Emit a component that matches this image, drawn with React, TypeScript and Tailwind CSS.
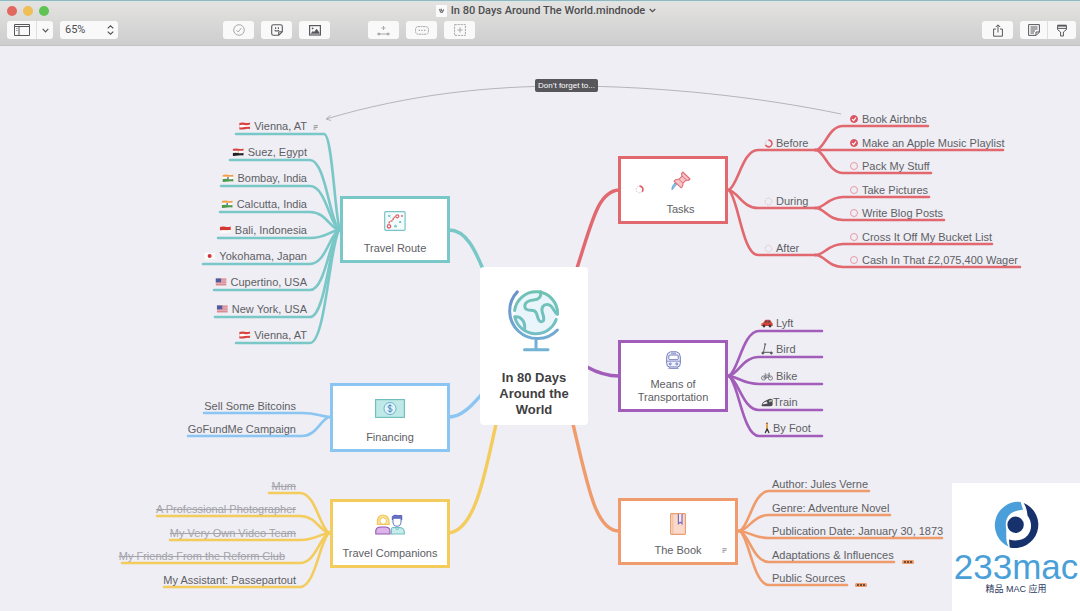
import React, { useState } from "react";

const TOOLBAR = 46;

const TEAL = "#7ac7c8";
const BLUE = "#8ac6f1";
const YELLOW = "#f4cc5c";
const RED = "#e2686f";
const PURPLE = "#a25dba";
const ORANGE = "#f09b6b";

type Topic = {
  text: string;
  from: number;
  to: number;
  y: number;
  textX: number;
  icon?: React.ReactNode;
  struck?: boolean;
  checked?: boolean;
  note?: boolean;
};

type Branch = {
  color: string;
  side: "left" | "right";
  hub: [number, number];
  rise: number;
  topics: Topic[];
};

/* ---------- small pictograms ---------- */

function Flag({ kind }: { kind: "at" | "eg" | "in" | "id" | "jp" | "us" }) {
  return (
    <svg width="11" height="8" viewBox="0 0 11 8" className="shrink-0" aria-hidden="true">
      {kind === "at" && (
        <>
          <path d="M0 1 Q3 0 5.5 .8 T11 .4 V7 Q8 6.6 5.5 7.2 T0 7.4Z" fill="#d9433f" />
          <path d="M0 3.2 Q3 2.4 5.5 3 T11 2.6 V4.8 Q8 4.5 5.5 5.1 T0 5.3Z" fill="#fff" />
        </>
      )}
      {kind === "eg" && (
        <>
          <path d="M0 1 Q3 0 5.5 .8 T11 .4 V3 H0Z" fill="#d8403f" />
          <path d="M0 2.8 H11 V5.2 H0Z" fill="#fff" />
          <path d="M0 5 Q3 4.4 5.5 5 T11 4.7 V7.4 Q8 7 5.5 7.5 T0 7.9Z" fill="#222" />
          <circle cx="5.5" cy="4" r=".7" fill="#c79a3a" />
        </>
      )}
      {kind === "in" && (
        <>
          <path d="M0 1 Q3 0 5.5 .8 T11 .4 V3 H0Z" fill="#f0a04a" />
          <path d="M0 2.8 H11 V5.2 H0Z" fill="#fff" />
          <path d="M0 5 Q3 4.4 5.5 5 T11 4.7 V7.4 Q8 7 5.5 7.5 T0 7.9Z" fill="#4d9a4c" />
          <circle cx="5.5" cy="4" r=".9" fill="#4b5fa8" />
        </>
      )}
      {kind === "id" && (
        <>
          <path d="M0 1 Q3 0 5.5 .8 T11 .4 V4 Q8 3.7 5.5 4.3 T0 4.6Z" fill="#d7352f" />
          <path d="M0 4.6 Q3 3.8 5.5 4.3 T11 4 V7 Q8 6.6 5.5 7.2 T0 7.4Z" fill="#fafafa" />
        </>
      )}
      {kind === "jp" && (
        <>
          <path d="M0 1 Q3 0 5.5 .8 T11 .4 V7 Q8 6.6 5.5 7.2 T0 7.4Z" fill="#fbfbfb" />
          <circle cx="5.3" cy="4" r="2" fill="#d3343a" />
        </>
      )}
      {kind === "us" && (
        <>
          <path d="M0 .6 H11 V7.4 H0Z" fill="#efd9dc" />
          <path d="M0 1.1H11M0 3H11M0 4.9H11M0 6.8H11" stroke="#cf6a74" strokeWidth="1" />
          <path d="M0 .6 H5.5 V4.3 H0Z" fill="#4d5c9d" />
        </>
      )}
    </svg>
  );
}

function Car() {
  return (
    <svg width="12" height="10" viewBox="0 0 12 10" aria-hidden="true">
      <path d="M.3 8V5.4L2.4 4.6 4 2.2Q4.3 1.7 5 1.7H8.4Q9 1.7 9.4 2.2L10.8 4.5 11.7 5.4V8Z" fill="#d8443c" />
      <path d="M3.6 4.5 4.7 2.7H6V4.5ZM6.7 4.5V2.7H8.4L9.5 4.5Z" fill="#47505c" />
      <circle cx="3" cy="8" r="1.4" fill="#3b3b3f" />
      <circle cx="9" cy="8" r="1.4" fill="#3b3b3f" />
      <path d="M.3 6H1.5" stroke="#f4d36a" />
    </svg>
  );
}
function Scooter() {
  return (
    <svg width="12" height="12" viewBox="0 0 12 12" fill="none" stroke="#54545a" aria-hidden="true">
      <path d="M3 1H5.2M4.3 1 2.6 8.8M2.6 9.3H9.6" />
      <circle cx="1.9" cy="10" r="1" fill="#54545a" />
      <circle cx="10.3" cy="10" r="1" fill="#54545a" />
    </svg>
  );
}
function Bike() {
  return (
    <svg width="12" height="9" viewBox="0 0 12 9" fill="none" stroke="#6b6b72" strokeWidth=".8" aria-hidden="true">
      <circle cx="2.6" cy="6" r="2.1" />
      <circle cx="9.4" cy="6" r="2.1" />
      <path d="M2.6 6 4.3 3H8L6 6H2.6M4.3 3 6 6M8 3 9.4 6M7.4 1.2H8.6L8 3M3.5 1.9H5.1" />
    </svg>
  );
}
function Train() {
  return (
    <svg width="12" height="9" viewBox="0 0 12 9" aria-hidden="true">
      <path d="M.5 7.4Q.8 4.6 4 3L8 .9Q11 .3 11.6 1.4V7Q11 8.2 9 8.2H2Q.5 8.2.5 7.4Z" fill="#4a4a4f" />
      <path d="M2 5.3Q4 3.8 6 3.6L6.5 5.4Q4 6.4 1.4 6.2Z" fill="#e8e8ec" />
      <path d="M8 2.5 11 1.6V3.4L8 4.2Z" fill="#a9bdb0" />
    </svg>
  );
}
function Walker() {
  return (
    <svg width="6" height="12" viewBox="0 0 6 12" fill="none" strokeLinecap="round" aria-hidden="true">
      <circle cx="3" cy="1.5" r="1.1" fill="#9a6b46" />
      <path d="M3 3V6.5" stroke="#e6a04b" strokeWidth="2" />
      <path d="M3 7 1.4 10.6M3.2 7 4.8 10.6" stroke="#37373c" strokeWidth="1.3" />
    </svg>
  );
}

function Progress({ share }: { share: number }) {
  const r = 3.4;
  const c = 2 * Math.PI * r;
  return (
    <svg width="9" height="9" viewBox="0 0 9 9" fill="none" className="shrink-0" aria-hidden="true">
      <circle cx="4.5" cy="4.5" r={r} stroke="#dcaab4" strokeWidth=".8" strokeDasharray="1.4 1.2" />
      {share > 0 && (
        <circle
          cx="4.5"
          cy="4.5"
          r={r}
          stroke="#df5c68"
          strokeWidth="1.6"
          strokeDasharray={`${c * share} ${c}`}
          transform="rotate(-90 4.5 4.5)"
        />
      )}
    </svg>
  );
}

function NoteMark() {
  return (
    <svg width="5" height="5" viewBox="0 0 5 5" stroke="#8b8b92" strokeWidth=".9" aria-hidden="true">
      <path d="M.4.7H4.8M.4 2.4H4.4M.2 4.1H2.6" />
    </svg>
  );
}

/* ---------- main-topic drawings ---------- */

function Globe() {
  return (
    <svg width="54" height="64" viewBox="0 0 54 64" fill="none" strokeWidth="3" strokeLinecap="round" aria-hidden="true">
      <defs>
        <linearGradient id="stand" x1="0" y1="0" x2="0" y2="64" gradientUnits="userSpaceOnUse">
          <stop offset="0" stopColor="#6a8fce" />
          <stop offset="1" stopColor="#74b4d4" />
        </linearGradient>
        <linearGradient id="sphere" x1="0" y1="0" x2="0" y2="46" gradientUnits="userSpaceOnUse">
          <stop offset="0" stopColor="#6fc3b2" />
          <stop offset="1" stopColor="#74bfc6" />
        </linearGradient>
      </defs>
      <circle cx="29" cy="23.5" r="21" fill="#e9f5fa" />
      <path d="M10.3 2.9A27.6 27.6 0 1 0 50.4 41" stroke="url(#stand)" />
      <path d="M29 51.5V60.5M17.5 60.8H41" stroke="url(#stand)" />
      <g stroke="url(#sphere)">
        <path d="M7.6 21.5A21.6 21.6 0 0 1 50.6 25" />
        <path d="M49.2 30.5A21.6 21.6 0 0 1 7.8 28" />
        <path d="M33.5 2.6C34.6 8 31.5 10.7 26.5 11C21.5 11.3 17.6 13.5 17.8 17.5C18 22.2 23.5 20.8 27 21.8C31.2 23 29.7 31.6 33.5 32.6C38.6 33.6 36.5 27 35.3 23.2C34 18.5 36.2 15.4 40.5 15.6C46 15.8 46 22.4 50.4 25.2" />
        <path d="M8 27.8C13.6 27.4 18.6 31.8 17.6 40.5" />
      </g>
    </svg>
  );
}
function RouteMap() {
  return (
    <svg width="22" height="20" viewBox="0 0 22 20" fill="none" aria-hidden="true">
      <rect x=".7" y=".7" width="20.4" height="18.6" rx="1" fill="#f4fbfb" stroke="#79c3c6" strokeWidth="1.2" />
      <path d="M5 12.5C5 9.8 7.5 10.5 8.5 9.5S9 6 11.3 6" stroke="#e0606a" strokeWidth="1.4" strokeDasharray="2.2 .6" />
      <circle cx="13.3" cy="5.3" r="1.5" stroke="#e0606a" strokeWidth="1.2" />
      <circle cx="5" cy="15.3" r="1.7" stroke="#e0606a" strokeWidth="1.3" />
      <circle cx="18" cy="5" r=".9" fill="#e0606a" />
      <path d="M4 4.2 6.5 6.2M6.5 3.8 4.4 6M10.3 15.8 11.5 13.8 12.7 15.8ZM15.3 10 17 12M17 10 15.3 12" stroke="#6cbfc0" />
    </svg>
  );
}
function Banknote() {
  return (
    <svg width="30" height="19" viewBox="0 0 30 19" fill="none" aria-hidden="true">
      <rect x=".6" y=".6" width="28.8" height="17.8" fill="#bfe9e6" stroke="#6cbcbc" strokeWidth="1.1" />
      <circle cx="15" cy="9.5" r="6" fill="#e6f5f9" stroke="#6aaed4" />
      <path d="M17.1 7.5Q16.6 6.4 15 6.4 13 6.4 13 7.9 13 9.2 15 9.5 17.2 9.8 17.2 11.1 17.2 12.6 15 12.6 13.2 12.6 12.8 11.3M15 5.2V13.8" stroke="#4b8ec4" />
    </svg>
  );
}
function Couple() {
  return (
    <svg width="30" height="21" viewBox="0 0 30 21" fill="none" aria-hidden="true">
      <path d="M2.4 10.5Q1.6 1 8 1T14.2 10.5Z" fill="#fae39c" stroke="#efc455" strokeWidth="1.2" />
      <circle cx="8.2" cy="7" r="3.3" fill="#fff" stroke="#efc455" />
      <path d="M.8 20V16.5Q1.3 13 6 13H10Q14.5 13 15 16.5V20Z" fill="#dcb4ea" stroke="#9256b2" strokeWidth="1.1" />
      <path d="M16.4 20V16.5Q15.8 14 18 13.5H25Q29 14 29.3 17.5V20Z" fill="#c5ecea" stroke="#70bfc1" strokeWidth="1.1" />
      <path d="M18 5.5V8.5Q18.6 12.2 22 12.2T26 8.5V5.5" fill="#fff" stroke="#7281cb" strokeWidth="1.1" />
      <path d="M17.3 6V2.5Q20 .3 22.5 1.5H26.8V6L25 4.3H19Z" fill="#6872c7" stroke="#4d55b0" strokeWidth=".8" />
      <path d="M20 13.5 22.3 16 24.5 13.5" stroke="#70bfc1" />
    </svg>
  );
}
function Pin() {
  return (
    <svg width="20" height="20" viewBox="0 0 20 20" fill="none" strokeLinejoin="round" aria-hidden="true">
      <path d="M5.8 13.2 1 18.8 1.2 16 3.8 12Z" fill="#8bc4e8" stroke="#68a9d6" />
      <path d="M11.8 1 19 8 17.3 9.5 15.4 8.9 12 12.2Q12.3 15 10.3 16.8L2.9 10.2Q4.5 8 8 8.3L11 5 10.4 2.6Z" fill="#f7c3c6" stroke="#dd6f78" strokeWidth="1.1" />
      <path d="M11 5 15.4 8.9M8 8.3 12 12.2" stroke="#dd6f78" />
    </svg>
  );
}
function Metro() {
  return (
    <svg width="15" height="19" viewBox="0 0 15 19" fill="none" stroke="#6f79bd" aria-hidden="true">
      <path d="M4.500 .8H10.500Q14.300 1.600 14.300 6V12.500Q14.300 16 11.300 16H3.700Q.7 16 .7 12.500V6Q.7 1.600 4.500 .8Z" fill="#eff1fb" />
      <rect x="2.8" y="4" width="9.400" height="4.700" rx="1" fill="#fff" />
      <path d="M5 2.300H10M.8 10.200H14.200M3.600 16 2.600 18M11.400 16 12.400 18M3.400 17.500H11.600" strokeWidth=".8" />
      <circle cx="4.200" cy="12.900" r="1" />
      <circle cx="10.800" cy="12.900" r="1" />
    </svg>
  );
}
function Book() {
  return (
    <svg width="16" height="22" viewBox="0 0 16 22" fill="none" aria-hidden="true">
      <rect x=".6" y=".6" width="14.8" height="20.8" rx=".8" fill="#fad9cb" stroke="#e79c72" strokeWidth="1.1" />
      <path d="M2.8 1V21" stroke="#efb190" strokeWidth=".8" />
      <path d="M8.4 1V10.8L10.2 9.2 12 10.8V1" fill="#fbe9e4" stroke="#6d63c0" strokeWidth="1.1" />
    </svg>
  );
}

/* ---------- document ---------- */

const branches: Branch[] = [
  {
    color: TEAL,
    side: "left",
    hub: [341, 230],
    rise: 15,
    topics: [
      { text: "Vienna, AT", from: 236, to: 324, y: 134, textX: 307, icon: <Flag kind="at" />, note: true },
      { text: "Suez, Egypt", from: 230, to: 310, y: 160, textX: 307, icon: <Flag kind="eg" /> },
      { text: "Bombay, India", from: 221, to: 310, y: 186, textX: 307, icon: <Flag kind="in" /> },
      { text: "Calcutta, India", from: 220, to: 310, y: 212, textX: 307, icon: <Flag kind="in" /> },
      { text: "Bali, Indonesia", from: 218, to: 310, y: 238, textX: 307, icon: <Flag kind="id" /> },
      { text: "Yokohama, Japan", from: 203, to: 310, y: 264, textX: 307, icon: <Flag kind="jp" /> },
      { text: "Cupertino, USA", from: 214, to: 310, y: 290, textX: 307, icon: <Flag kind="us" /> },
      { text: "New York, USA", from: 215, to: 310, y: 317, textX: 307, icon: <Flag kind="us" /> },
      { text: "Vienna, AT", from: 236, to: 310, y: 343, textX: 307, icon: <Flag kind="at" /> },
    ],
  },
  {
    color: BLUE,
    side: "left",
    hub: [331, 417],
    rise: 14,
    topics: [
      { text: "Sell Some Bitcoins", from: 204, to: 302, y: 413, textX: 296 },
      { text: "GoFundMe Campaign", from: 188, to: 302, y: 436, textX: 296 },
    ],
  },
  {
    color: YELLOW,
    side: "left",
    hub: [331, 533],
    rise: 14,
    topics: [
      { text: "Mum", from: 269, to: 300, y: 493, textX: 296, struck: true },
      { text: "A Professional Photographer", from: 157, to: 300, y: 516, textX: 296, struck: true },
      { text: "My Very Own Video Team", from: 170, to: 300, y: 540, textX: 296, struck: true },
      { text: "My Friends From the Reform Club", from: 122, to: 300, y: 563, textX: 285, struck: true },
      { text: "My Assistant: Passepartout", from: 164, to: 300, y: 587, textX: 296 },
    ],
  },
  {
    color: RED,
    side: "right",
    hub: [727, 190],
    rise: 14,
    topics: [
      { text: "Before", from: 758, to: 816, y: 150, textX: 764, icon: <Progress share={0.66} /> },
      { text: "During", from: 758, to: 816, y: 208, textX: 764, icon: <Progress share={0} /> },
      { text: "After", from: 758, to: 816, y: 255, textX: 764, icon: <Progress share={0} /> },
    ],
  },
  {
    color: RED,
    side: "right",
    hub: [815, 150],
    rise: 14,
    topics: [
      { text: "Book Airbnbs", from: 843, to: 928, y: 126, textX: 850, checked: true },
      { text: "Make an Apple Music Playlist", from: 843, to: 1003, y: 150, textX: 850, checked: true },
      { text: "Pack My Stuff", from: 843, to: 931, y: 173, textX: 850, checked: false },
    ],
  },
  {
    color: RED,
    side: "right",
    hub: [815, 208],
    rise: 14,
    topics: [
      { text: "Take Pictures", from: 843, to: 929, y: 197, textX: 850, checked: false },
      { text: "Write Blog Posts", from: 843, to: 944, y: 220, textX: 850, checked: false },
    ],
  },
  {
    color: RED,
    side: "right",
    hub: [815, 255],
    rise: 14,
    topics: [
      { text: "Cross It Off My Bucket List", from: 843, to: 992, y: 244, textX: 850, checked: false },
      { text: "Cash In That £2,075,400 Wager", from: 843, to: 1020, y: 267, textX: 850, checked: false },
    ],
  },
  {
    color: PURPLE,
    side: "right",
    hub: [727, 376],
    rise: 15,
    topics: [
      { text: "Lyft", from: 759, to: 822, y: 331, textX: 761, icon: <Car /> },
      { text: "Bird", from: 759, to: 822, y: 357, textX: 761, icon: <Scooter /> },
      { text: "Bike", from: 759, to: 822, y: 384, textX: 761, icon: <Bike /> },
      { text: "Train", from: 759, to: 822, y: 410, textX: 761, icon: <Train /> },
      { text: "By Foot", from: 759, to: 822, y: 436, textX: 764, icon: <Walker /> },
    ],
  },
  {
    color: ORANGE,
    side: "right",
    hub: [738, 531],
    rise: 14,
    topics: [
      { text: "Author: Jules Verne", from: 769, to: 869, y: 491, textX: 772 },
      { text: "Genre: Adventure Novel", from: 769, to: 890, y: 515, textX: 772 },
      { text: "Publication Date: January 30, 1873", from: 769, to: 942, y: 538, textX: 772 },
      { text: "Adaptations & Influences", from: 769, to: 894, y: 562, textX: 772 },
      { text: "Public Sources", from: 769, to: 847, y: 585, textX: 772 },
    ],
  },
];

const trunks: [string, string][] = [
  [TEAL, "M449 230C466 230 475 250 483 269"],
  [BLUE, "M449 417C462 417 472 405 482 394"],
  [YELLOW, "M449 533C474 530 484 480 496 424"],
  [RED, "M619 190C598 191 592 222 577 268"],
  [PURPLE, "M619 376C606 376 596 372 587 367"],
  [ORANGE, "M619 531C596 531 588 488 573 424"],
];

const folded: [number, number][] = [
  [902, 560],
  [855, 583],
];

function topicPath(branch: Branch, t: Topic) {
  const [hx, hy] = branch.hub;
  const near = branch.side === "left" ? t.to : t.from;
  const far = branch.side === "left" ? t.from : t.to;
  const run = near - hx;
  const start = hx + run * 0.06;
  return `M${hx} ${hy}H${start}C${hx + run * 0.36} ${hy + (t.y - hy) * 0.12} ${near - run * 0.5} ${t.y} ${near} ${t.y}H${far}`;
}

function CheckTopic({ topic }: { topic: Topic }) {
  const [done, setDone] = useState(!!topic.checked);
  return (
    <label className="flex items-center gap-1">
      <span className="relative flex">
        <input
          type="checkbox"
          checked={done}
          onChange={() => setDone(!done)}
          className="size-2 appearance-none rounded-full border border-[#e79aa4] checked:border-[#dd5563] checked:bg-[#dd5563]"
        />
        {done && (
          <svg viewBox="0 0 8 8" fill="none" stroke="#fff" strokeWidth="1.1" className="pointer-events-none absolute inset-0 size-2" aria-hidden="true">
            <path d="M2 4.2 3.5 5.6 6 2.6" />
          </svg>
        )}
      </span>
      {topic.text}
    </label>
  );
}

function TopicLabel({ topic, side, rise }: { topic: Topic; side: "left" | "right"; rise: number }) {
  const look = topic.struck ? "text-[#a4a4aa] line-through" : "text-[#5e5e64]";
  const anchor = side === "left" ? "-translate-x-full" : "";
  const tight = topic.text === "Train";
  const gap = tight ? "gap-0" : side === "right" && topic.icon ? "gap-[3px]" : "gap-1";
  return (
    <li
      className={`absolute flex h-[14px] items-center whitespace-nowrap text-[11px] leading-[14px] ${gap} ${look} ${anchor}`}
      style={{ left: topic.textX, top: topic.y - rise - TOOLBAR }}
    >
      {topic.checked !== undefined ? (
        <CheckTopic topic={topic} />
      ) : (
        <>
          {topic.icon}
          {topic.text}
        </>
      )}
      {topic.note && (
        <span className="absolute top-[6px] left-full ml-[6px]">
          <NoteMark />
        </span>
      )}
    </li>
  );
}

type BoxProps = {
  x: number;
  y: number;
  className: string;
  icon: React.ReactNode;
  children: React.ReactNode;
};

function Box({ x, y, className, icon, children }: BoxProps) {
  return (
    <section
      className={`absolute flex flex-col items-center justify-between border-3 bg-white pb-[5px] text-center text-[11px] leading-[13px] text-[#5e5e64] ${className}`}
      style={{ left: x, top: y - TOOLBAR }}
    >
      {icon}
      <h2>{children}</h2>
    </section>
  );
}

function ToolButton({ label, children, dim }: { label: string; children: React.ReactNode; dim?: boolean }) {
  return (
    <button
      type="button"
      aria-label={label}
      className={`flex h-[18px] w-[31px] items-center justify-center rounded-[3px] bg-[#f9f9fa] ${dim ? "text-[#a9a9ac]" : "text-[#58585c]"}`}
    >
      {children}
    </button>
  );
}

function Header() {
  return (
    <header className="flex h-[46px] shrink-0 flex-col border-t border-b border-t-[#94b9bd] border-b-[#c3c3c6] bg-linear-to-b from-[#e4e3e1] to-[#cdcdce] shadow-[inset_0_1px_0_#d5e6ea]">
      <div className="grid h-[19px] grid-cols-[1fr_auto_1fr] items-center">
        <div className="flex gap-[6px] pl-[7px]">
          <button type="button" aria-label="Close" className="size-[10px] rounded-full bg-[#e1695f]" />
          <button type="button" aria-label="Minimize" className="size-[10px] rounded-full bg-[#efbe55]" />
          <button type="button" aria-label="Zoom window" className="size-[10px] rounded-full bg-[#5fc454]" />
        </div>
        <div className="flex items-center gap-1 pl-3 text-[#4d4d50]">
          <svg width="11" height="12" viewBox="0 0 11 12" aria-hidden="true">
            <rect width="11" height="12" fill="#fafafa" />
            <path d="M3.500 4 4.500 7 6.200 7.300 7.800 4.500M5 3.800 5.800 6" fill="none" stroke="#66666b" strokeWidth="1.1" />
          </svg>
          <h1 className="font-[Roboto,sans-serif] text-[11px] leading-4 font-medium">In 80 Days Around The World.mindnode</h1>
          <svg width="7" height="5" viewBox="0 0 7 5" fill="none" stroke="currentColor" strokeWidth="1.2" aria-hidden="true">
            <path d="M.7 1 3.5 3.6 6.3 1" />
          </svg>
        </div>
      </div>
      <div className="flex items-center pt-px pr-1 pl-[7px]">
        <div className="flex h-[18px] rounded-[3px] bg-[#f9f9fa] text-[#58585c]">
          <button type="button" aria-label="View" className="flex w-[30px] items-center justify-center border-r border-[#dedee0]">
            <svg width="16" height="12" viewBox="0 0 16 12" fill="none" stroke="currentColor" aria-hidden="true">
              <path d="M.5.5H15.5V11.5H.5ZM.5 2.5H15.5M5 2.5V11.5" />
              <path d="M2 4.500H3.600M2 6.500H3.600" strokeWidth=".6" />
            </svg>
          </button>
          <button type="button" aria-label="View options" className="flex w-4 items-center justify-center">
            <svg width="7" height="5" viewBox="0 0 7 5" fill="none" stroke="currentColor" strokeWidth="1.2" aria-hidden="true">
              <path d="M.7.8 3.5 3.8 6.3.8" />
            </svg>
          </button>
        </div>
        <div className="relative ml-[7px] flex h-[18px] w-[58px] items-center rounded-[3px] bg-[#f9f9fa] text-[#4d4d50]">
          <select
            aria-label="Zoom level"
            defaultValue="65"
            className="h-full w-full appearance-none pl-[5px] font-[Roboto,sans-serif] text-[11px] leading-4 outline-none"
          >
            <option value="50">50%</option>
            <option value="65">65%</option>
            <option value="100">100%</option>
          </select>
          <svg width="7" height="10" viewBox="0 0 7 10" fill="none" stroke="currentColor" strokeWidth="1.1" className="pointer-events-none absolute right-1" aria-hidden="true">
            <path d="M.7 3.4 3.5.8 6.3 3.4M.7 6.6 3.5 9.2 6.3 6.6" />
          </svg>
        </div>
        <div className="ml-[105px] flex gap-[7px]">
          <ToolButton label="Task" dim>
            <svg width="12" height="12" viewBox="0 0 12 12" fill="none" stroke="currentColor" aria-hidden="true">
              <circle cx="6" cy="6" r="5.3" />
              <path d="M3.5 6.3 5.2 8 8.4 4" />
            </svg>
          </ToolButton>
          <ToolButton label="Sticker">
            <svg width="12" height="12" viewBox="0 0 12 12" fill="none" stroke="currentColor" strokeWidth="1.1" aria-hidden="true">
              <path d="M2.5.7H9.5Q11.3.7 11.3 2.5V7.7L7.7 11.3H2.5Q.7 11.3.7 9.5V2.5Q.7.7 2.5.7ZM7.7 11V8.6Q7.7 7.7 8.6 7.7H11M4.6 3.2V5M7.4 3.2V5M3.6 6.3Q5.5 7.8 8 6.3" />
            </svg>
          </ToolButton>
          <ToolButton label="Image">
            <svg width="12" height="11" viewBox="0 0 12 11" fill="none" stroke="currentColor" aria-hidden="true">
              <rect x=".6" y=".6" width="10.8" height="9.4" strokeWidth="1.2" />
              <path d="M1.6 8.8 3.8 6 5 7 7.6 3.8 10.4 7.5V8.8Z" fill="currentColor" stroke="none" />
              <circle cx="3.6" cy="3.4" r=".9" fill="currentColor" stroke="none" />
            </svg>
          </ToolButton>
        </div>
        <div className="ml-[38px] flex gap-[7px]">
          <ToolButton label="New connection" dim>
            <svg width="13" height="11" viewBox="0 0 13 11" fill="none" stroke="currentColor" aria-hidden="true">
              <path d="M6.5 1V5M4.5 3H8.5M2 9H11" />
              <path d="M.8 8H3V10H.8ZM10 8H12.2V10H10Z" fill="currentColor" strokeWidth=".5" />
            </svg>
          </ToolButton>
          <ToolButton label="Fold" dim>
            <svg width="14" height="9" viewBox="0 0 14 9" fill="none" stroke="currentColor" aria-hidden="true">
              <rect x=".6" y=".6" width="12.8" height="7.6" rx="2.4" strokeDasharray="2 .5" />
              <path d="M3.6 4.4H5M6.3 4.4H7.7M9 4.4H10.4" strokeWidth="1.4" />
            </svg>
          </ToolButton>
          <ToolButton label="Focus" dim>
            <svg width="12" height="12" viewBox="0 0 12 12" fill="none" stroke="currentColor" aria-hidden="true">
              <rect x=".6" y=".6" width="10.8" height="10.8" strokeDasharray="2.2 .8" />
              <path d="M6 3.4V8.6M3.4 6H8.6" />
            </svg>
          </ToolButton>
        </div>
        <div className="ml-auto flex gap-[7px]">
          <ToolButton label="Share">
            <svg width="10" height="13" viewBox="0 0 10 13" fill="none" stroke="currentColor" aria-hidden="true">
              <path d="M3 5H.6V12.2H9.4V5H7M5 8.5V1M2.8 3 5 .8 7.2 3" />
            </svg>
          </ToolButton>
          <div className="flex h-[18px] rounded-[3px] bg-[#f9f9fa] text-[#58585c]">
            <button type="button" aria-label="Notes" className="flex w-7 items-center justify-center border-r border-[#dedee0]">
              <svg width="12" height="12" viewBox="0 0 12 12" fill="none" stroke="currentColor" aria-hidden="true">
                <path d="M.6.6H11.4V8.2L8.2 11.4H.6ZM8 11V8H11M2.5 3H9.5M2.5 5H9.5M2.5 7H7M2.5 9H6" />
              </svg>
            </button>
            <button type="button" aria-label="Style" className="flex w-7 items-center justify-center">
              <svg width="10" height="13" viewBox="0 0 10 13" fill="none" stroke="currentColor" aria-hidden="true">
                <path d="M.6 1.2H9.4V5.6L6.4 8V12H3.6V8L.6 5.6ZM.6 4.4H9.4" />
                <path d="M1 1.8H9" strokeWidth="1.6" />
              </svg>
            </button>
          </div>
        </div>
      </div>
    </header>
  );
}

function Watermark() {
  return (
    <aside className="absolute right-0 bottom-0 flex size-32 flex-col items-center bg-white pt-[18px]">
      <svg width="48" height="48" viewBox="0 0 48 48" aria-hidden="true">
        <path d="M28.700 1A23.400 23.400 0 0 0 16.600 45.600C13.800 41 14.300 36 14.300 29C13.600 25 13.400 21 15 17.500C18 11 24 9.500 31 8.700Z" fill="#4a9fdb" />
        <path d="M31.700 2A23.400 23.400 0 0 1 17.700 46.500L17 38.500C24 40.500 31 39.500 35.500 34.500C40.500 28.500 40 20.500 35.500 14.500C35.200 10 34 5.500 31.700 2Z" fill="#16316b" />
        <circle cx="23.600" cy="23.800" r="8.200" fill="#16316b" />
      </svg>
      <p className="text-[35px] leading-[36px] text-[#4a9fd8]">233mac</p>
      <p className="text-[9px] leading-[8px] text-[#2d3a5e]">精品 MAC 应用</p>
    </aside>
  );
}

export default function App() {
  return (
    <div className="flex h-screen flex-col overflow-hidden bg-[#eeeef4] font-['Liberation_Sans','Noto_Sans_CJK_SC',sans-serif]">
      <Header />
      <main className="relative grow overflow-hidden">
        <svg className="absolute inset-0 size-full" fill="none" aria-hidden="true">
          <g transform={`translate(0 ${-TOOLBAR})`}>
            <g stroke="#b4b4bb" strokeWidth="1">
              <path d="M841 114C760 97 660 86 566 86C490 86 410 94 326 119" />
              <path d="M330.5 115.5 326 119 331 120.5" />
            </g>
            {branches.map((b, i) => (
              <g key={i} stroke={b.color} strokeWidth="2.6" strokeLinecap="round">
                {b.topics.map((t) => (
                  <path key={t.y} d={topicPath(b, t)} />
                ))}
              </g>
            ))}
            {trunks.map(([color, d]) => (
              <path key={d} d={d} stroke={color} strokeWidth="3.4" />
            ))}
            {folded.map(([x, y]) => (
              <g key={x}>
                <rect x={x} y={y} width="12" height="4" rx="1.5" fill="#eb9a6c" />
                <path d={`M${x + 2} ${y + 2}h2m1 0h2m1 0h2`} stroke="#4a3426" strokeWidth="1.6" />
              </g>
            ))}
          </g>
        </svg>

        {branches.map((b, i) => (
          <ul key={i}>
            {b.topics.map((t) => (
              <TopicLabel key={t.y} topic={t} side={b.side} rise={b.rise} />
            ))}
          </ul>
        ))}

        <span className="absolute top-[33px] left-[535px] rounded-[2px] bg-[#56565b] px-[3px] text-[8px] leading-[13px] whitespace-nowrap text-white">
          Don’t forget to...
        </span>

        <Box x={340} y={196} className="h-[67px] w-[110px] border-[#7ac7c8] pt-3" icon={<RouteMap />}>
          Travel Route
        </Box>
        <Box x={330} y={383} className="h-[69px] w-[120px] border-[#8ac6f1] pt-[13px]" icon={<Banknote />}>
          Financing
        </Box>
        <Box x={330} y={499} className="h-[69px] w-[120px] border-[#f4cc5c] pt-3" icon={<Couple />}>
          Travel Companions
        </Box>
        <Box x={618} y={156} className="h-[68px] w-[110px] border-[#e2686f] pt-3 pl-[15px]" icon={<Pin />}>
          Tasks
          <span className="absolute top-[26px] left-[14px]">
            <Progress share={0.35} />
          </span>
        </Box>
        <Box x={618} y={340} className="h-[72px] w-[110px] border-[#a25dba] pt-2" icon={<Metro />}>
          Means of
          <br />
          Transportation
        </Box>
        <Box x={618} y={498} className="h-[67px] w-[120px] border-[#f09b6b] pt-3" icon={<Book />}>
          The Book
          <span className="absolute right-2 bottom-[9px]">
            <NoteMark />
          </span>
        </Box>

        <section className="absolute top-[221px] left-[480px] flex h-[158px] w-[108px] flex-col items-center justify-between rounded-[4px] bg-white px-3 pt-[22px] pb-[7px]">
          <Globe />
          <h2 className="text-center text-[13px] leading-4 font-bold text-[#3f3f43]">In 80 Days Around the World</h2>
        </section>
      </main>
      <Watermark />
    </div>
  );
}
